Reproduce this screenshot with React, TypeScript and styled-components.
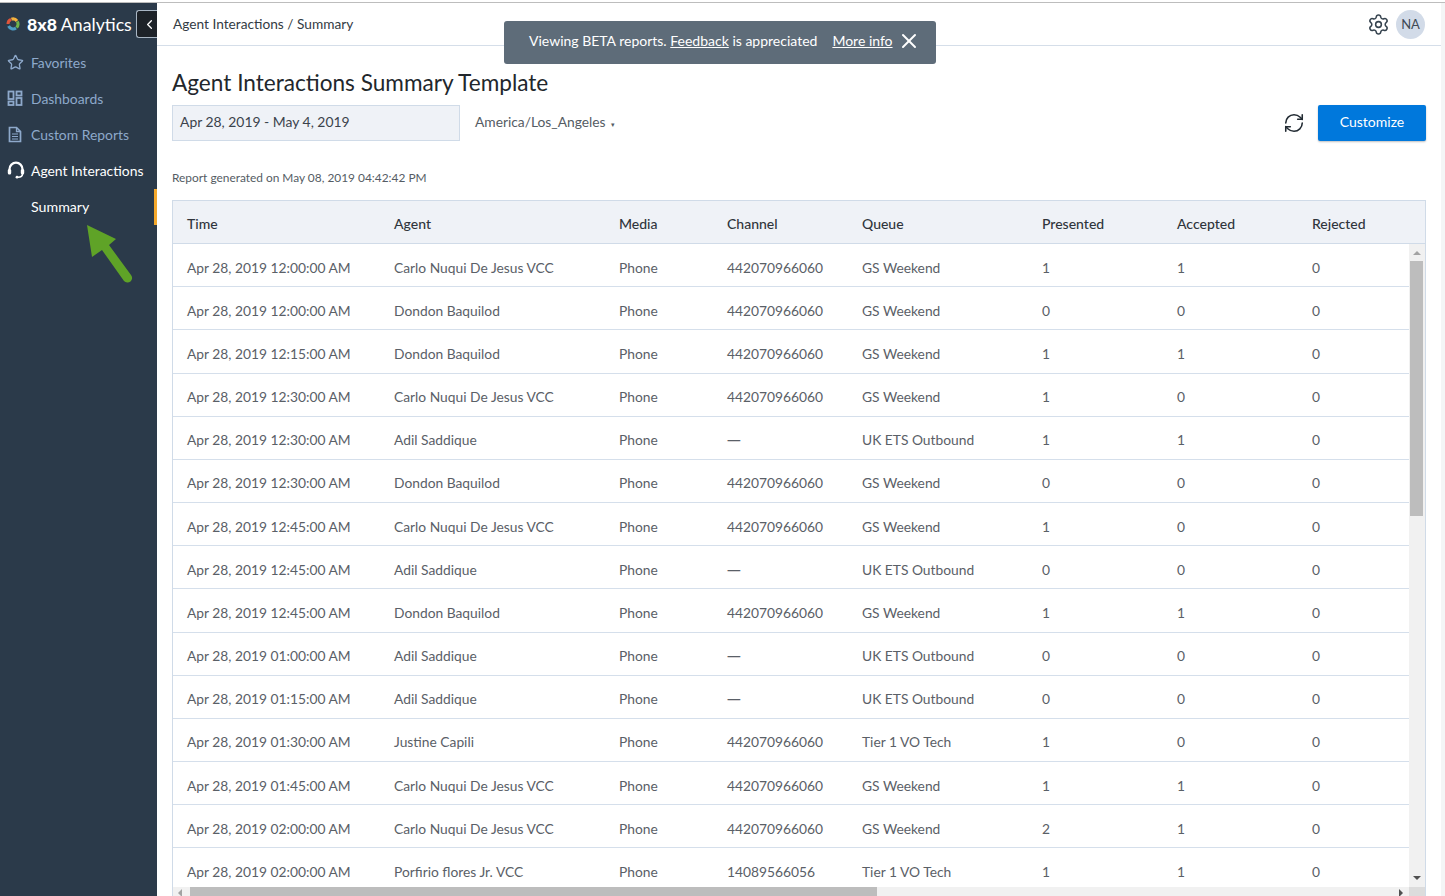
import React from 'react'
import styled, { createGlobalStyle } from 'styled-components'
import { Star, Settings, RefreshCw, X, ChevronLeft } from 'lucide-react'

let GlobalStyle = createGlobalStyle`
	html, body {
		margin: 0;
		padding: 0;
		height: 100%;
		overflow: hidden;
		background: #fff;
	}
	body {
		font-family: Lato, 'Noto Sans', sans-serif;
		color: #4a4f55;
	}
`

type Row = {
	time: string;
	agent: string;
	channel: string;
	queue: string;
	presented: number;
	accepted: number;
	rejected: number;
}

let row = (time: string, agent: string, channel: string, queue: string, presented: number, accepted: number): Row => ({
	time: `Apr 28, 2019 ${time}`,
	agent,
	channel,
	queue,
	presented,
	accepted,
	rejected: 0,
})

let CARLO = 'Carlo Nuqui De Jesus VCC'
let DONDON = 'Dondon Baquilod'
let ADIL = 'Adil Saddique'
let PHONE = '442070966060'
let NONE = '—'
let GS = 'GS Weekend'
let UK = 'UK ETS Outbound'

let rows: Row[] = [
	row('12:00:00 AM', CARLO, PHONE, GS, 1, 1),
	row('12:00:00 AM', DONDON, PHONE, GS, 0, 0),
	row('12:15:00 AM', DONDON, PHONE, GS, 1, 1),
	row('12:30:00 AM', CARLO, PHONE, GS, 1, 0),
	row('12:30:00 AM', ADIL, NONE, UK, 1, 1),
	row('12:30:00 AM', DONDON, PHONE, GS, 0, 0),
	row('12:45:00 AM', CARLO, PHONE, GS, 1, 0),
	row('12:45:00 AM', ADIL, NONE, UK, 0, 0),
	row('12:45:00 AM', DONDON, PHONE, GS, 1, 1),
	row('01:00:00 AM', ADIL, NONE, UK, 0, 0),
	row('01:15:00 AM', ADIL, NONE, UK, 0, 0),
	row('01:30:00 AM', 'Justine Capili', PHONE, 'Tier 1 VO Tech', 1, 0),
	row('01:45:00 AM', CARLO, PHONE, GS, 1, 1),
	row('02:00:00 AM', CARLO, PHONE, GS, 2, 1),
	row('02:00:00 AM', 'Porfirio flores Jr. VCC', '14089566056', 'Tier 1 VO Tech', 1, 1),
]

let DashboardIcon = () => (
	<svg width="16" height="16" viewBox="0 0 16 16" fill="none" stroke="currentColor" strokeWidth="1.8">
		<rect x="1.5" y="1.5" width="5" height="7.5" />
		<rect x="9.5" y="1.5" width="5" height="4" />
		<rect x="1.5" y="11.5" width="5" height="3.5" />
		<rect x="9.5" y="8" width="5" height="7" />
	</svg>
)

let ReportIcon = () => (
	<svg width="16" height="17" viewBox="0 0 16 17" fill="none" stroke="currentColor" strokeWidth="1.7">
		<path d="M2.5 1.5h7l4 4v10h-11z" />
		<path d="M9.5 1.5v4h4" strokeWidth="1.3" />
		<path d="M5 8h6M5 10.5h6M5 13h6" strokeWidth="1.2" />
	</svg>
)

let HeadsetIcon = () => (
	<svg width="18" height="18" viewBox="0 0 18 18" fill="none" stroke="currentColor" strokeWidth="2.2">
		<path d="M2.5 10V8.2a6.5 6.5 0 0 1 13 0V10" />
		<rect x="0.8" y="8" width="3.4" height="5.4" rx="1.5" fill="currentColor" stroke="none" />
		<rect x="13.8" y="8" width="3.4" height="5.4" rx="1.5" fill="currentColor" stroke="none" />
		<path d="M15.5 13c0 2.4-2 3.2-4.5 3.2" strokeWidth="1.5" />
		<circle cx="10" cy="16.2" r="1.4" fill="currentColor" stroke="none" />
	</svg>
)

let LogoMark = () => (
	<svg width="14" height="14" viewBox="0 0 14 14" fill="none" strokeWidth="3">
		<path d="M2 7a5 5 0 0 1 3-4.6" stroke="#e0553a" />
		<path d="M5.4 2.2A5 5 0 0 1 11 4" stroke="#f4b13d" />
		<path d="M11.3 4.5A5 5 0 0 1 10.5 10.5" stroke="#6fb24b" />
		<path d="M10 11A5 5 0 0 1 2.6 9" stroke="#4d9cc4" />
	</svg>
)

let GreenArrow = () => (
	<ArrowSvg width="50" height="62" viewBox="0 0 50 62">
		<path d="M1 0 L30 14 L23 20 L45 50 A4.6 4.6 0 0 1 38 56 L16 25 L6 32 Z" fill="#5fa327" />
	</ArrowSvg>
)

let navItems = [
	{ label: 'Favorites', icon: <Star size={17} strokeWidth={1.9} /> },
	{ label: 'Dashboards', icon: <DashboardIcon /> },
	{ label: 'Custom Reports', icon: <ReportIcon /> },
]

let columns = ['Time', 'Agent', 'Media', 'Channel', 'Queue', 'Presented', 'Accepted', 'Rejected']

export default function App() {
	return (
		<Page>
			<GlobalStyle />
			<TopLine />
			<Shell>
				<Sidebar>
					<Brand>
						<LogoMark />
						<BrandName><strong>8x8</strong> Analytics</BrandName>
						<Collapse><ChevronLeft size={15} strokeWidth={2} /></Collapse>
					</Brand>
					<Nav>
						{navItems.map(item => (
							<NavItem key={item.label}>
								<NavIcon>{item.icon}</NavIcon>
								{item.label}
							</NavItem>
						))}
						<NavItem $active>
							<NavIcon><HeadsetIcon /></NavIcon>
							Agent Interactions
						</NavItem>
						<SubItem>Summary</SubItem>
						<GreenArrow />
					</Nav>
				</Sidebar>
				<Main>
					<Header>
						<Crumbs>Agent Interactions / Summary</Crumbs>
						<HeaderTools>
							<Settings size={23} strokeWidth={1.6} color="#36434f" />
							<Avatar>NA</Avatar>
						</HeaderTools>
					</Header>
					<Banner>
						<span>Viewing BETA reports. <BannerLink>Feedback</BannerLink> is appreciated</span>
						<BannerLink>More info</BannerLink>
						<X size={24} strokeWidth={2} />
					</Banner>
					<Content>
						<Title>Agent Interactions Summary Template</Title>
						<Controls>
							<DateRange>Apr 28, 2019 - May 4, 2019</DateRange>
							<Timezone>America/Los_Angeles<Caret>▾</Caret></Timezone>
							<Actions>
								<RefreshCw size={22} strokeWidth={1.7} color="#222b33" />
								<Customize>Customize</Customize>
							</Actions>
						</Controls>
						<Generated>Report generated on May 08, 2019 04:42:42 PM</Generated>
						<TableBox>
							<HeadRow>
								{columns.map(c => <HeadCell key={c}>{c}</HeadCell>)}
							</HeadRow>
							<BodyArea>
								<Rows>
									{rows.map((r, i) => (
										<DataRow key={i}>
											<Cell>{r.time}</Cell>
											<Cell>{r.agent}</Cell>
											<Cell>Phone</Cell>
											<Cell>{r.channel === NONE ? <Dash>{NONE}</Dash> : r.channel}</Cell>
											<Cell>{r.queue}</Cell>
											<Cell>{r.presented}</Cell>
											<Cell>{r.accepted}</Cell>
											<Cell>{r.rejected}</Cell>
										</DataRow>
									))}
								</Rows>
								<VScroll>
									<ArrowUp />
									<VThumb />
									<VSpacer />
									<ArrowDown />
								</VScroll>
							</BodyArea>
							<HScroll>
								<ArrowLeft />
								<HThumb />
								<HSpacer />
								<ArrowRight />
								<Corner />
							</HScroll>
						</TableBox>
					</Content>
				</Main>
				<RightGutter />
			</Shell>
		</Page>
	)
}

let Page = styled.div`
	height: 896px;
	display: flex;
	flex-direction: column;
	overflow: hidden;
`

let TopLine = styled.div`
	height: 1px;
	margin-top: 2px;
	background: #bdbdbd;
	flex: none;
`

let Shell = styled.div`
	flex: 1;
	min-height: 0;
	display: flex;
`

let Sidebar = styled.aside`
	width: 157px;
	flex: none;
	background: #2b3a4a;
	color: #fff;
`

let Brand = styled.div`
	height: 42px;
	display: flex;
	align-items: center;
	padding-left: 6px;
	box-sizing: border-box;
`

let BrandName = styled.div`
	margin-left: 7px;
	font-size: 17.7px;
	white-space: nowrap;
	width: 109px;
	flex: none;

	strong {
		font-weight: 900;
	}
`

let Collapse = styled.div`
	width: 21px;
	height: 28px;
	flex: none;
	padding-left: 4px;
	box-sizing: border-box;
	background: #1d2228;
	border: 1px solid #a9b6c4;
	border-right: none;
	border-radius: 3px 0 0 3px;
	display: flex;
	align-items: center;
	justify-content: center;
`

let Nav = styled.nav`
	position: relative;
	display: flex;
	flex-direction: column;
`

let NavItem = styled.div<{ $active?: boolean }>`
	height: 36px;
	display: flex;
	align-items: center;
	box-sizing: border-box;
	padding-bottom: 2px;
	font-size: 13.9px;
	white-space: nowrap;
	color: ${p => (p.$active ? '#fff' : '#8ea9cb')};
`

let NavIcon = styled.span`
	width: 31px;
	padding-left: 7px;
	box-sizing: border-box;
	display: flex;
	flex: none;
`

let SubItem = styled.div`
	height: 36px;
	display: flex;
	align-items: center;
	padding: 0 0 2px 31px;
	font-size: 14.2px;
	box-sizing: border-box;
	border-right: 3px solid #f5a92d;
`

let ArrowSvg = styled.svg`
	position: absolute;
	left: 86px;
	top: 180px;
`

let Main = styled.main`
	flex: 1;
	min-width: 0;
	position: relative;
	display: flex;
	flex-direction: column;
`

let Header = styled.header`
	height: 43px;
	flex: none;
	box-sizing: border-box;
	border-bottom: 1px solid #d5dee9;
	display: flex;
	align-items: center;
	justify-content: space-between;
	padding: 0 16px 0 16px;
`

let Crumbs = styled.div`
	font-size: 13.7px;
	padding-bottom: 2px;
	color: #333b44;
`

let HeaderTools = styled.div`
	display: flex;
	align-items: center;
	gap: 6px;
`

let Avatar = styled.div`
	width: 29px;
	height: 29px;
	border-radius: 50%;
	background: #d2dbe8;
	color: #3f4a55;
	font-size: 13px;
	display: flex;
	align-items: center;
	justify-content: center;
`

let Banner = styled.div`
	position: absolute;
	left: 347px;
	top: 18px;
	width: 432px;
	height: 43px;
	padding: 0 0 4px 25px;
	box-sizing: border-box;
	border-radius: 3px;
	background: #5e6c79;
	color: #fff;
	font-size: 14px;
	display: flex;
	align-items: center;
	gap: 15px;
	white-space: nowrap;

	svg {
		margin-left: -11px;
	}
`

let BannerLink = styled.span`
	text-decoration: underline;
`

let Content = styled.div`
	flex: 1;
	min-height: 0;
	display: flex;
	flex-direction: column;
	padding: 0 15px;
`

let Title = styled.h1`
	margin: 22px 0 0;
	height: 37px;
	font-size: 22.6px;
	line-height: 30px;
	font-weight: 400;
	color: #22272c;
`

let Controls = styled.div`
	display: flex;
	align-items: center;
	height: 36px;
`

let DateRange = styled.div`
	width: 288px;
	height: 36px;
	box-sizing: border-box;
	padding-left: 7px;
	border: 1px solid #d0dbe8;
	background: #eff2f7;
	font-size: 13.9px;
	line-height: 32px;
	color: #3b434c;
`

let Timezone = styled.div`
	margin-left: 15px;
	font-size: 13.8px;
	color: #555c64;
	padding-bottom: 4px;
`

let Caret = styled.span`
	font-size: 7px;
	margin-left: 5px;
`

let Actions = styled.div`
	margin-left: auto;
	display: flex;
	align-items: center;
	gap: 13px;
`

let Customize = styled.button`
	width: 108px;
	height: 36px;
	padding: 0 0 4px;
	border: none;
	border-radius: 2px;
	background: #0078dc;
	color: #fff;
	font-family: inherit;
	font-size: 14px;
	box-shadow: 0 1px 2px rgba(0, 0, 0, 0.25);
`

let Generated = styled.div`
	margin-top: 29px;
	height: 30px;
	font-size: 11.9px;
	line-height: 16px;
	color: #555c64;
`

let TableBox = styled.div`
	flex: 1;
	min-height: 0;
	display: flex;
	flex-direction: column;
	border: 1px solid #d0dbe8;
	border-bottom: none;
	overflow: hidden;
`

let gridColumns = `207px 225px 108px 135px 180px 135px 135px 1fr`

let HeadRow = styled.div`
	height: 43px;
	flex: none;
	box-sizing: border-box;
	display: grid;
	grid-template-columns: ${gridColumns};
	align-items: center;
	padding: 3px 0 0 14px;
	background: #eff2f7;
	border-bottom: 1px solid #d0dbe8;
`

let HeadCell = styled.div`
	font-size: 14px;
	font-weight: 500;
	color: #2f353c;
`

let BodyArea = styled.div`
	flex: 1;
	min-height: 0;
	display: flex;
	overflow: hidden;
`

let Rows = styled.div`
	flex: 1;
	min-width: 0;
	overflow: hidden;
`

let DataRow = styled.div`
	height: 43.18px;
	box-sizing: border-box;
	display: grid;
	grid-template-columns: ${gridColumns};
	align-items: center;
	padding: 4px 0 0 14px;
	border-bottom: 1px solid #d5dfeb;
`

let Cell = styled.div`
	font-size: 13.8px;
	color: #5a6067;
	white-space: nowrap;
`

let Dash = styled.span`
	font-family: 'Noto Sans', sans-serif;
`

let VScroll = styled.div`
	width: 16px;
	flex: none;
	background: #f1f1f1;
	display: flex;
	flex-direction: column;
	align-items: center;
`

let VThumb = styled.div`
	width: 13px;
	height: 255px;
	margin-right: 2px;
	background: #bdbdbd;
	flex: none;
`

let VSpacer = styled.div`
	flex: 1;
`

let ArrowUp = styled.div`
	flex: none;
	margin: 7px 0 6px;
	width: 0;
	height: 0;
	border-left: 4px solid transparent;
	border-right: 4px solid transparent;
	border-bottom: 4px solid #a3a3a3;
`

let ArrowDown = styled.div`
	flex: none;
	margin: 6px 0 7px;
	width: 0;
	height: 0;
	border-left: 4px solid transparent;
	border-right: 4px solid transparent;
	border-top: 4px solid #505050;
`

let HScroll = styled.div`
	height: 9px;
	flex: none;
	background: #f1f1f1;
	display: flex;
	align-items: flex-start;
`

let HThumb = styled.div`
	width: 687px;
	height: 9px;
	flex: none;
	background: #bdbdbd;
`

let HSpacer = styled.div`
	flex: 1;
`

let ArrowLeft = styled.div`
	flex: none;
	margin: 2px 8px 0 5px;
	width: 0;
	height: 0;
	border-top: 4px solid transparent;
	border-bottom: 4px solid transparent;
	border-right: 4px solid #a3a3a3;
`

let ArrowRight = styled.div`
	flex: none;
	margin: 2px 6px 0 0;
	width: 0;
	height: 0;
	border-top: 4px solid transparent;
	border-bottom: 4px solid transparent;
	border-left: 4px solid #505050;
`

let Corner = styled.div`
	width: 16px;
	height: 9px;
	flex: none;
	background: #dcdcdc;
`

let RightGutter = styled.div`
	width: 4px;
	flex: none;
	background: #f4f5f6;
`
